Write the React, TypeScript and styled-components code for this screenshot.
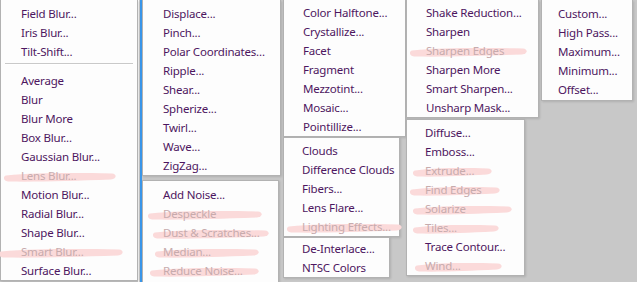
import React from 'react';
import styled, { createGlobalStyle } from 'styled-components';

const Global = createGlobalStyle`
  html, body { margin: 0; padding: 0; background: #c8c8c8; }
  body { font-family: "Noto Sans", "Open Sans", sans-serif; }
`;

const Page = styled.div`
  width: 637px;
  height: 282px;
  overflow: hidden;
  background: #c8c8c8;
  display: flex;
  align-items: stretch;
`;

const Column = styled.div<{ $width: number; $gap?: number }>`
  width: ${(p) => p.$width}px;
  flex: none;
  display: flex;
  flex-direction: column;
  align-items: flex-start;
  gap: ${(p) => p.$gap ?? 0}px;
`;

const BlueRule = styled.div`
  width: 2px;
  flex: none;
  margin-left: 1px;
  background: #3a97ea;
`;

const WhiteGap = styled.div`
  width: 1px;
  flex: none;
  background: #fdfdfd;
`;

const Menu = styled.div<{ $width: number; $pt: number; $pb: number; $cropTop?: boolean; $indent: number }>`
  position: relative;
  box-sizing: border-box;
  width: ${(p) => p.$width}px;
  flex: none;
  background: #fdfdfd;
  border: 1px solid #b2b2b2;
  ${(p) => (p.$cropTop ? 'border-top: none;' : '')}
  padding: ${(p) => p.$pt}px 0 ${(p) => p.$pb}px;
  box-shadow: 1px 1px 2px rgba(0, 0, 0, 0.12);
  --indent: ${(p) => p.$indent}px;
`;

const Item = styled.div<{ $disabled?: boolean }>`
  position: relative;
  height: 19px;
  line-height: 19px;
  padding-left: var(--indent);
  font-size: 11.5px;
  letter-spacing: -0.2px;
  white-space: nowrap;
  color: ${(p) => (p.$disabled ? '#c7abad' : '#4d1660')};
`;

const Label = styled.span`
  position: relative;
  z-index: 1;
`;

const Separator = styled.div`
  height: 1px;
  margin: 2px 4px 6px 4px;
  background: #c9c9c9;
  border-bottom: 1px solid #ffffff;
`;

const StrokeSvg = styled.svg<{ $x: number }>`
  position: absolute;
  left: ${(p) => p.$x}px;
  top: 4px;
  overflow: visible;
  pointer-events: none;
  z-index: 0;
`;

function Stroke({ x0, x1 }: { x0: number; x1: number }) {
  const w = x1 - x0;
  const d = `M1 5.5 C ${w * 0.3} 2.5, ${w * 0.65} 3, ${w - 3} 3.5 C ${w + 2} 4, ${w + 2} 9, ${w - 4} 9.5 C ${w * 0.6} 11, ${w * 0.3} 12, 3 11.5 C -2 11, -2 6, 1 5.5 Z`;
  return (
    <StrokeSvg $x={x0} width={w} height={14} viewBox={`0 0 ${w} 14`}>
      <path d={d} fill="#fbdada" style={{ filter: 'blur(0.5px)' }} />
    </StrokeSvg>
  );
}

type Entry = { label: string; stroke?: [number, number] } | 'sep';

type MenuDef = {
  width: number;
  pt: number;
  pb: number;
  indent: number;
  cropTop?: boolean;
  items: Entry[];
};

const blur: MenuDef = {
  width: 138, pt: 4, pb: 0, indent: 20, cropTop: true,
  items: [
    { label: 'Field Blur...' },
    { label: 'Iris Blur...' },
    { label: 'Tilt-Shift...' },
    'sep',
    { label: 'Average' },
    { label: 'Blur' },
    { label: 'Blur More' },
    { label: 'Box Blur...' },
    { label: 'Gaussian Blur...' },
    { label: 'Lens Blur...', stroke: [4, 114] },
    { label: 'Motion Blur...' },
    { label: 'Radial Blur...' },
    { label: 'Shape Blur...' },
    { label: 'Smart Blur...', stroke: [-1, 121] },
    { label: 'Surface Blur...' },
  ],
};

const distort: MenuDef = {
  width: 139, pt: 4, pb: 0, indent: 20, cropTop: true,
  items: [
    { label: 'Displace...' },
    { label: 'Pinch...' },
    { label: 'Polar Coordinates...' },
    { label: 'Ripple...' },
    { label: 'Shear...' },
    { label: 'Spherize...' },
    { label: 'Twirl...' },
    { label: 'Wave...' },
    { label: 'ZigZag...' },
  ],
};

const noise: MenuDef = {
  width: 137, pt: 4, pb: 2, indent: 20,
  items: [
    { label: 'Add Noise...' },
    { label: 'Despeckle', stroke: [6, 118] },
    { label: 'Dust & Scratches...', stroke: [11, 125] },
    { label: 'Median...', stroke: [13, 115] },
    { label: 'Reduce Noise...', stroke: [8, 115] },
  ],
};

const pixelate: MenuDef = {
  width: 123, pt: 3, pb: 0, indent: 19, cropTop: true,
  items: [
    { label: 'Color Halftone...' },
    { label: 'Crystallize...' },
    { label: 'Facet' },
    { label: 'Fragment' },
    { label: 'Mezzotint...' },
    { label: 'Mosaic...' },
    { label: 'Pointillize...' },
  ],
};

const render: MenuDef = {
  width: 117, pt: 3, pb: 0, indent: 18,
  items: [
    { label: 'Clouds' },
    { label: 'Difference Clouds' },
    { label: 'Fibers...' },
    { label: 'Lens Flare...' },
    { label: 'Lighting Effects...', stroke: [4, 117] },
  ],
};

const video: MenuDef = {
  width: 107, pt: 1, pb: 0, indent: 18,
  items: [{ label: 'De-Interlace...' }, { label: 'NTSC Colors' }],
};

const sharpen: MenuDef = {
  width: 133, pt: 3, pb: 0, indent: 19, cropTop: true,
  items: [
    { label: 'Shake Reduction...' },
    { label: 'Sharpen' },
    { label: 'Sharpen Edges', stroke: [4, 119] },
    { label: 'Sharpen More' },
    { label: 'Smart Sharpen...' },
    { label: 'Unsharp Mask...' },
  ],
};

const stylize: MenuDef = {
  width: 119, pt: 3, pb: 0, indent: 18,
  items: [
    { label: 'Diffuse...' },
    { label: 'Emboss...' },
    { label: 'Extrude...', stroke: [7, 84] },
    { label: 'Find Edges', stroke: [4, 92] },
    { label: 'Solarize', stroke: [7, 104] },
    { label: 'Tiles...', stroke: [7, 91] },
    { label: 'Trace Contour...' },
    { label: 'Wind...', stroke: [9, 94] },
  ],
};

const other: MenuDef = {
  width: 92, pt: 4, pb: 1, indent: 16, cropTop: true,
  items: [
    { label: 'Custom...' },
    { label: 'High Pass...' },
    { label: 'Maximum...' },
    { label: 'Minimum...' },
    { label: 'Offset...' },
  ],
};

function FilterMenu({ def }: { def: MenuDef }) {
  return (
    <Menu $width={def.width} $pt={def.pt} $pb={def.pb} $cropTop={def.cropTop} $indent={def.indent}>
      {def.items.map((it, i) =>
        it === 'sep' ? (
          <Separator key={i} />
        ) : (
          <Item key={i} $disabled={!!it.stroke}>
            {it.stroke && <Stroke x0={it.stroke[0]} x1={it.stroke[1]} />}
            <Label>{it.label}</Label>
          </Item>
        )
      )}
    </Menu>
  );
}

export default function App() {
  return (
    <>
      <Global />
      <Page>
        <Column $width={138}>
          <FilterMenu def={blur} />
        </Column>
        <WhiteGap />
        <BlueRule />
        <Column $width={141} $gap={4}>
          <FilterMenu def={distort} />
          <FilterMenu def={noise} />
        </Column>
        <Column $width={123}>
          <FilterMenu def={pixelate} />
          <FilterMenu def={render} />
          <FilterMenu def={video} />
        </Column>
        <Column $width={135} $gap={1}>
          <FilterMenu def={sharpen} />
          <FilterMenu def={stylize} />
        </Column>
        <Column $width={97}>
          <FilterMenu def={other} />
        </Column>
      </Page>
    </>
  );
}
